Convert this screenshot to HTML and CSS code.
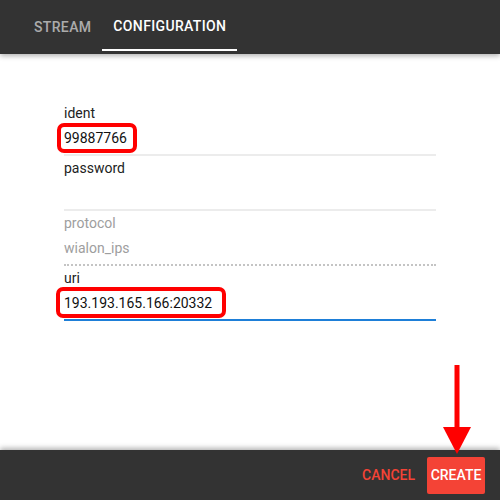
FILE: index.html
```html
<!DOCTYPE html>
<html>
<head>
<meta charset="utf-8">
<link rel="stylesheet" href="styles.css">
</head>
<body>
<div class="dialog">
  <header class="tabs">
    <div class="tab">Stream</div>
    <div class="tab active">Configuration</div>
  </header>
  <main class="form">
    <div class="field">
      <div class="label">ident</div>
      <div class="value"><span class="mark mark-ident">99887766</span></div>
    </div>
    <div class="field">
      <div class="label">password</div>
      <div class="value"></div>
    </div>
    <div class="field disabled">
      <div class="label">protocol</div>
      <div class="value">wialon_ips</div>
    </div>
    <div class="field focused">
      <div class="label">uri</div>
      <div class="value"><span class="mark mark-uri">193.193.165.166:20332</span></div>
    </div>
  </main>
  <footer class="actions">
    <button class="btn flat">Cancel</button>
    <button class="btn raised">Create</button>
  </footer>
  <svg class="arrow" width="30" height="92" viewBox="0 0 30 92">
    <rect x="11.5" y="0" width="5" height="64" fill="#ff0000"/>
    <polygon points="0,62 28,62 14,89" fill="#ff0000"/>
  </svg>
</div>
</body>
</html>
```
FILE: styles.css
```css
* { box-sizing: border-box; }
html, body { margin: 0; padding: 0; }
body {
  width: 500px;
  height: 500px;
  font-family: Roboto, "Liberation Sans", sans-serif;
  background: #ffffff;
  overflow: hidden;
}
.dialog {
  position: relative;
  width: 500px;
  height: 500px;
  display: flex;
  flex-direction: column;
}
.tabs {
  height: 54px;
  background: #333333;
  display: flex;
  padding-left: 23px;
  box-shadow: 0 2px 5px rgba(0,0,0,0.3);
  position: relative;
  z-index: 1;
}
.tab {
  padding: 0 11px;
  height: 54px;
  line-height: 54px;
  font-size: 14px;
  font-weight: 500;
  letter-spacing: 0.35px;
  text-transform: uppercase;
  color: rgba(255,255,255,0.6);
}
.tab.active {
  color: #ffffff;
  border-bottom: 2px solid #ffffff;
  height: 51px;
  line-height: 53px;
}
.form {
  flex: 1;
  padding: 47px 64px 0 64px;
}
.field {
  height: 55px;
  padding-top: 2px;
  border-bottom: 2px solid #ececec;
}
.label {
  font-size: 14px;
  line-height: 20px;
  color: #222222;
}
.value {
  margin-top: 3px;
  font-size: 14px;
  line-height: 24px;
  height: 24px;
  color: #111111;
}
.field.disabled { border-bottom: 2px dotted #c4c4c4; }
.field.disabled .label,
.field.disabled .value { color: #9e9e9e; }
.field.focused { border-bottom: 2px solid #1e7fd8; }
.mark {
  position: relative;
  display: inline-block;
}
.mark::after {
  content: "";
  position: absolute;
  border: 4px solid #ff0000;
  border-radius: 7px;
}
.mark-ident::after { left: -7px; right: -10px; top: -3px; bottom: -3px; }
.mark-uri::after { left: -8px; right: -14px; top: -4px; bottom: -3px; }
.actions {
  height: 50px;
  background: #333333;
  display: flex;
  justify-content: flex-end;
  align-items: center;
  gap: 12px;
  padding-right: 15px;
  box-shadow: 0 -2px 5px rgba(0,0,0,0.3);
}
.btn {
  font-family: Roboto, "Liberation Sans", sans-serif;
  font-size: 14px;
  font-weight: 500;
  text-transform: uppercase;
  border: none;
  background: none;
  padding: 0;
  cursor: pointer;
}
.btn.flat { color: #f44336; }
.btn.raised {
  background: #f44336;
  color: #ffffff;
  width: 58px;
  height: 37px;
  border-radius: 2px;
}
.arrow {
  position: absolute;
  left: 443px;
  top: 365px;
  z-index: 2;
}
```
